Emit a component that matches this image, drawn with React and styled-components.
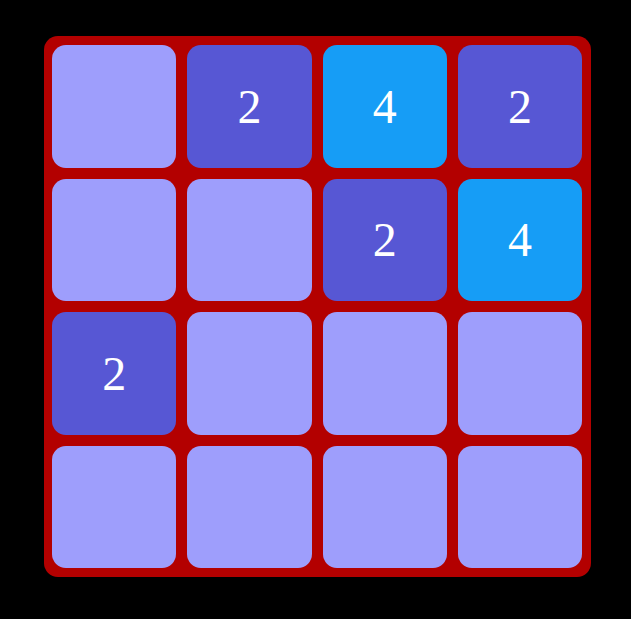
import styled, { createGlobalStyle } from 'styled-components';

const GlobalStyle = createGlobalStyle`
  html, body {
    margin: 0;
    background: #000;
  }
`;

const Page = styled.div`
  padding: 36px 0 42px 44px;
`;

const Board = styled.div`
  display: grid;
  grid-template-columns: repeat(4, 1fr);
  grid-template-rows: repeat(4, 1fr);
  gap: 11px;
  width: 547px;
  height: 541px;
  box-sizing: border-box;
  padding: 9px 9px 9px 8px;
  background: #b30000;
  border-radius: 14px;
`;

const tileColors = {
  0: '#9e9efc',
  2: '#5757d4',
  4: '#169df6',
};

const Tile = styled.div`
  display: flex;
  align-items: center;
  justify-content: center;
  border-radius: 14px;
  background: ${props => tileColors[props.value] || '#9e9efc'};
  color: #fff;
  font-family: 'Liberation Serif', 'Times New Roman', serif;
  font-size: 48px;
`;

const grid = [
  [0, 2, 4, 2],
  [0, 0, 2, 4],
  [2, 0, 0, 0],
  [0, 0, 0, 0],
];

const App = () => (
  <>
    <GlobalStyle />
    <Page>
      <Board>
        {grid.flat().map((value, i) => (
          <Tile key={`tile${i}`} value={value}>
            {value || ''}
          </Tile>
        ))}
      </Board>
    </Page>
  </>
);

export default App;
